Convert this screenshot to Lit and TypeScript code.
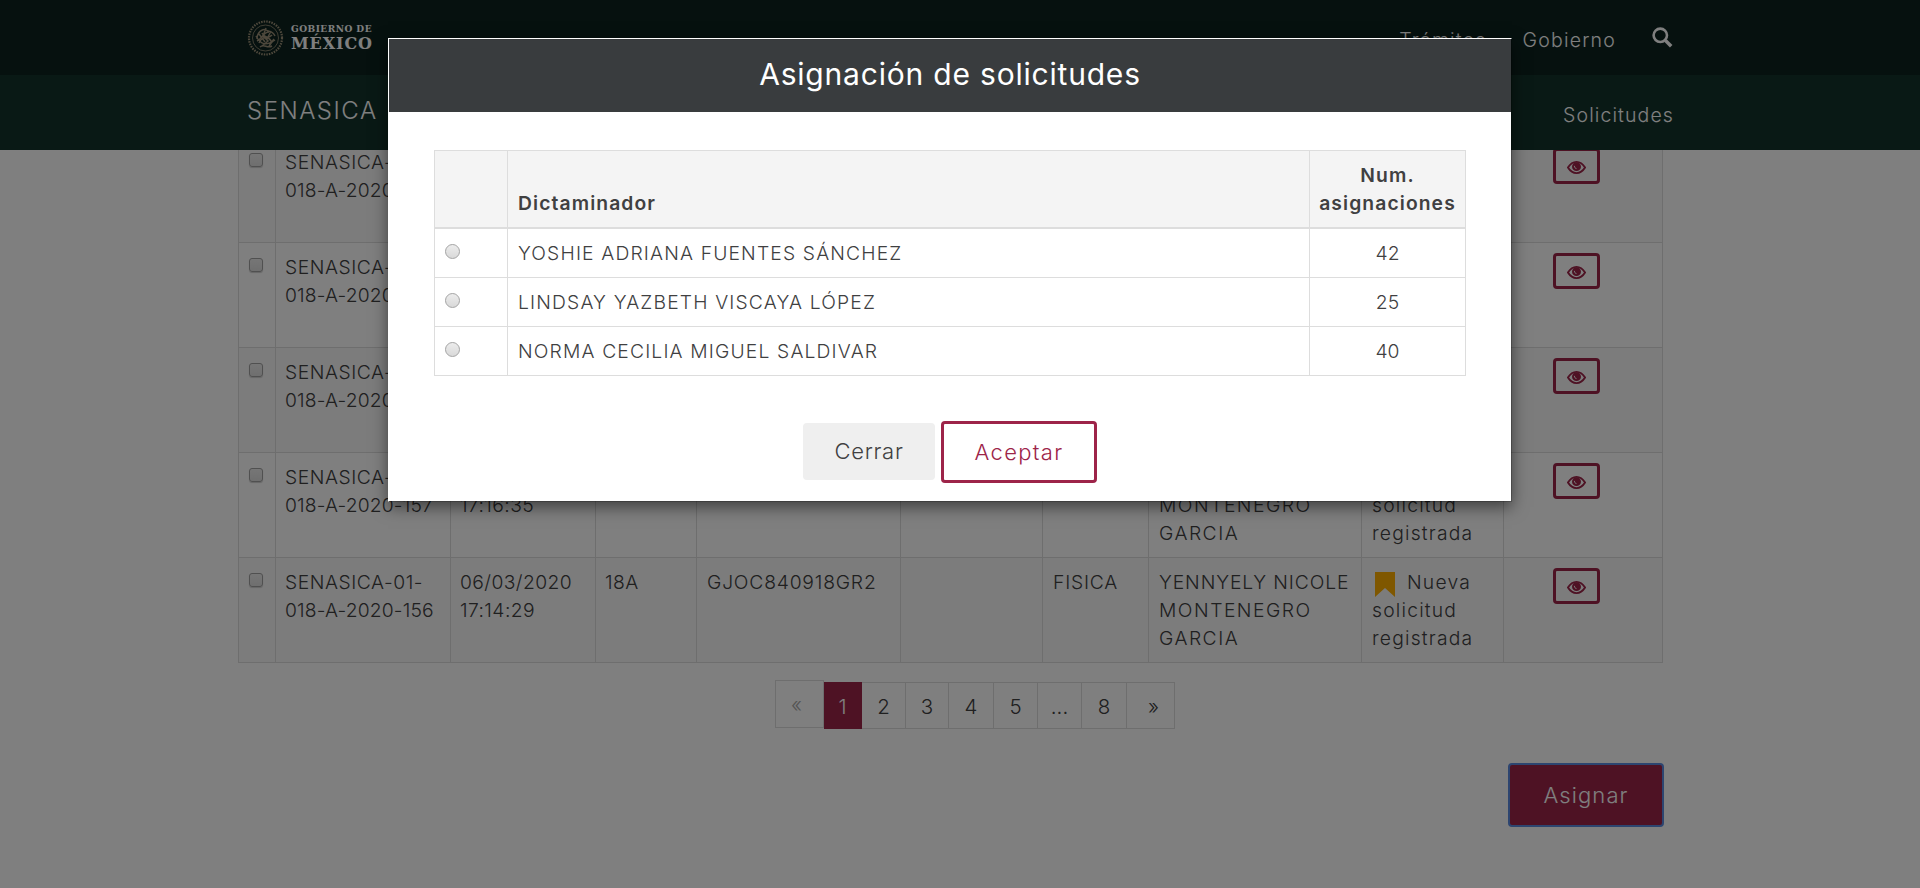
import { LitElement, html, css, svg } from "lit";
import { customElement } from "lit/decorators.js";

interface Solicitud { folio: string; hora: string }
const solicitudes: Solicitud[] = [
  { folio: "160", hora: "17:22:10" },
  { folio: "159", hora: "17:20:41" },
  { folio: "158", hora: "17:18:52" },
  { folio: "157", hora: "17:16:35" },
  { folio: "156", hora: "17:14:29" },
];
const dictaminadores = [
  ["YOSHIE ADRIANA FUENTES SÁNCHEZ", "42"],
  ["LINDSAY YAZBETH VISCAYA LÓPEZ", "25"],
  ["NORMA CECILIA MIGUEL SALDIVAR", "40"],
];
const pages = ["«", "1", "2", "3", "4", "5", "...", "8", "»"];

const eye = svg`<path d="M1 7.500C3.500 3.500 6.200 1.600 10 1.600s6.500 1.900 9 5.900c-2.500 4-5.200 5.900-9 5.900S3.500 11.500 1 7.500Z" fill="none" stroke="currentColor" stroke-width="2"/><circle cx="10" cy="6.600" r="4.700" fill="currentColor"/><path d="M7.800 5.800c0 1.600.8 2.600 2.200 2.900" fill="none" stroke="#fff" stroke-width="1"/>`;

@customElement("app-root")
export class AppRoot extends LitElement {
  static styles = css`
    :host { display: block; position: relative; height: 888px; overflow: hidden; background: #fff; color: #404041;
      font: 300 19.3px/28px Inter, "Liberation Sans", sans-serif; }
    * { box-sizing: border-box; }
    .top, .sub { height: 75px; background: #0c231e; color: #fff; position: relative; padding: 0 247px; display: flex; align-items: center; justify-content: space-between; }
    .sub { background: #13322b; }
    .brand { display: flex; gap: 6px; height: 38px; }
    .seal { width: 37px; height: 38px; }
    .word { font-family: "DejaVu Serif", serif; font-weight: 700; display: flex; flex-direction: column; padding: 4px 0 0 1px; white-space: nowrap; }
    .w1 { font-family: "DejaVu Serif Condensed", "DejaVu Serif", serif; font-size: 10px; line-height: 11px; letter-spacing: .5px; }
    .w2 { font-size: 16px; line-height: 20px; letter-spacing: .9px; }
    .links { display: flex; align-items: center; font-size: 19.5px; font-weight: 300; letter-spacing: 1.2px; padding-top: 4px; }
    .links span + span { margin-left: 36px; }
    .mag { width: 21px; height: 21px; margin: -5px 0 0 36px; }
    .sen { font-size: 24px; letter-spacing: 1.5px; margin-top: -4px; }
    .sub .links { letter-spacing: 1.1px; margin-right: -1px; }
    .page { height: 738px; overflow: hidden; padding: 0 256px 0 238px; }
    table { border-collapse: collapse; table-layout: fixed; }
    td, th { border: 1px solid #ddd; padding: 10px 9px; vertical-align: top; text-align: left; white-space: nowrap; }
    .list { width: 1425px; margin-top: -13px; }
    .list tr { height: 105px; }
    .list tr:nth-child(odd) { background: #f9f9f9; }
    .list .act { text-align: center; padding-right: 22px; }
    .c0 { width: 37px; padding-left: 10px; } .c1 { width: 175px; } .c2 { width: 145px; } .c3 { width: 101px; } .c4 { width: 204px; } .c5 { width: 142px; } .c6 { width: 106px; } .c7 { width: 213px; } .c8 { width: 142px; } .c9 { width: 159px; }
    .c4, .c6, .c7, .c8 { padding-left: 10px; }
    .t1 { letter-spacing: .4px; } .t2 { letter-spacing: .8px; } .t3 { letter-spacing: .9px; } .t4 { letter-spacing: 1.5px; } .t5 { letter-spacing: 1.2px; }
    .t0 { letter-spacing: .15px; } .t1s { letter-spacing: .55px; }
    .box { display: block; width: 14px; height: 14px; border: 1px solid #a0a0a0; border-radius: 3px; background: linear-gradient(#ededed, #dedede); margin-top: 5px; box-shadow: 0 1px 1px #ccc; }
    .eye { display: inline-flex; width: 47px; height: 36px; border: 3px solid #9d2449; border-radius: 4px; color: #9d2449; align-items: center; justify-content: center; padding-top: 3px; vertical-align: top; }
    .eye svg { width: 19px; height: 15px; }
    .flag { display: inline-block; width: 20px; height: 25px; vertical-align: top; margin: 4px 12px -5px 3px; }
    .pager { display: flex; margin: 17px 0 0 537px; font-size: 20.5px; line-height: 24px; }
    .pager span { border: 1px solid #ddd; border-left-width: 0; height: 47px; margin-top: 2px; padding-top: 12px; text-align: center; }
    .pager .on { background: #9d2449; color: #fff; border-color: #9d2449; }
    .pager .off { color: #aaa; border-left-width: 1px; height: 48px; margin-top: 0; padding-right: 6px; }
    .p0 { width: 49px; } .p1 { width: 38px; } .p2, .p5, .p6 { width: 44px; } .p3 { width: 43px; } .p4 { width: 45px; } .p7 { width: 45px; } .p8 { width: 48px; padding-left: 6px; }
    .foot { display: flex; justify-content: flex-end; padding-top: 34px; }
    .asignar { width: 156px; height: 64px; background: #9d2449; color: #fff; border: 2px solid #5a8ae0; border-radius: 4px; font-size: 22px; line-height: 60px; text-align: center; letter-spacing: 1.1px; }
    .shade { position: absolute; inset: 0; background: rgba(0, 0, 0, .5); }
    .modal { position: absolute; left: 388px; top: 38px; width: 1124px; height: 464px; background: #fff; border: 1px solid rgba(0, 0, 0, .2); border-top-color: #fff; border-left-color: #fff; box-shadow: 0 5px 15px rgba(0, 0, 0, .5); background-clip: padding-box; }
    .title { height: 73px; background: #393c3e; color: #fff; font-size: 30px; line-height: 71px; text-align: center; font-weight: 400; letter-spacing: .8px; }
    .people { width: 1032px; margin: 38px 0 0 45px; }
    .people th, .people td { padding-left: 10px; }
    .people th { background: #f4f4f4; vertical-align: bottom; font-weight: 600; border-bottom-width: 2px; letter-spacing: 1.1px; }
    .people thead tr { height: 77px; }
    .people tbody tr { height: 49px; }
    .k0 { width: 73px; } .k2 { width: 156px; }
    .people .num { text-align: center; padding-left: 0; padding-right: 0; }
    .people .name { letter-spacing: 1.15px; }
    .radio { display: block; width: 15px; height: 15px; border: 1px solid #a5a5a5; border-radius: 50%; background: linear-gradient(#ececec, #d9d9d9); margin-top: 5px; }
    .btns { display: flex; justify-content: center; align-items: center; gap: 6px; margin: 45px 0 0; font-size: 22px; }
    .close { width: 132px; height: 57px; border-radius: 4px; background: #efefef; line-height: 57px; text-align: center; letter-spacing: .7px; margin-top: -1px; }
    .ok { width: 156px; height: 62px; border: 3px solid #9d2449; border-radius: 4px; color: #9d2449; line-height: 57px; text-align: center; letter-spacing: 1.3px; }
  `;

  render() {
    return html`
      <header>
        <div class="top">
          <div class="brand">
            <svg class="seal" viewBox="0 0 37 38" fill="none" stroke="#9c9078">
              <circle cx="18.500" cy="19" r="16.500" stroke-width="2.200" stroke-dasharray="1.500 1.100"/>
              <circle cx="18.500" cy="19" r="13" stroke-width=".8"/>
              <path stroke-width="1.500" d="M10 20c0-7 6-11 9-9s6 0 9 6M12 24c4-9 9-3 13-8M9 17c5 9 10 10 19 4M13 28c4-4 7 2 12-1M15 14c2 5 8 3 10 10M19 9l-3 8 5 5-6 5M10 22c5-2 6-9 12-9M22 27l5-7M12 15l6 8M24 12l-4 8"/>
            </svg>
            <div class="word"><span class="w1">GOBIERNO DE</span><span class="w2">MÉXICO</span></div>
          </div>
          <div class="links"><span>Trámites</span><span>Gobierno</span>
            <svg class="mag" viewBox="0 0 21 21" fill="none" stroke="#fff"><circle cx="8.300" cy="8.300" r="6.700" stroke-width="2.600"/><path d="M13.500 13.500l5.700 5.700" stroke-width="3.500"/></svg>
          </div>
        </div>
        <div class="sub"><span class="sen">SENASICA</span><div class="links"><span>Solicitudes</span></div></div>
      </header>
      <main class="page">
        <table class="list">
          <tbody>${solicitudes.map((s) => html`<tr>
            <td class="c0"><i class="box"></i></td>
            <td class="c1 t0"><span class="t1s">SENASICA-01-</span><br>018-A-2020-${s.folio}</td>
            <td class="c2 t1">06/03/2020<br>${s.hora}</td>
            <td class="c3 t1">18A</td><td class="c4 t2">GJOC840918GR2</td><td class="c5"></td><td class="c6 t2">FISICA</td>
            <td class="c7 t4"><span class="t3">YENNYELY NICOLE</span><br>MONTENEGRO<br>GARCIA</td>
            <td class="c8 t5"><svg class="flag" viewBox="0 0 20 25"><path d="M0 0h20v25l-10-9L0 25Z" fill="#ffae00"/></svg>Nueva<br>solicitud<br>registrada</td>
            <td class="c9 act"><span class="eye"><svg viewBox="0 0 20 15">${eye}</svg></span></td>
          </tr>`)}</tbody>
        </table>
        <nav class="pager">${pages.map((p, i) => html`<span class="p${i} ${i === 0 ? "off" : i === 1 ? "on" : ""}">${p}</span>`)}</nav>
        <div class="foot"><div class="asignar">Asignar</div></div>
      </main>
      <div class="shade"></div>
      <section class="modal">
        <div class="title">Asignación de solicitudes</div>
        <table class="people">
          <thead><tr><th class="k0"></th><th>Dictaminador</th><th class="num k2">Num.<br>asignaciones</th></tr></thead>
          <tbody>${dictaminadores.map(([n, k]) => html`<tr><td><i class="radio"></i></td><td class="name">${n}</td><td class="num">${k}</td></tr>`)}</tbody>
        </table>
        <div class="btns"><div class="close">Cerrar</div><div class="ok">Aceptar</div></div>
      </section>`;
  }
}
